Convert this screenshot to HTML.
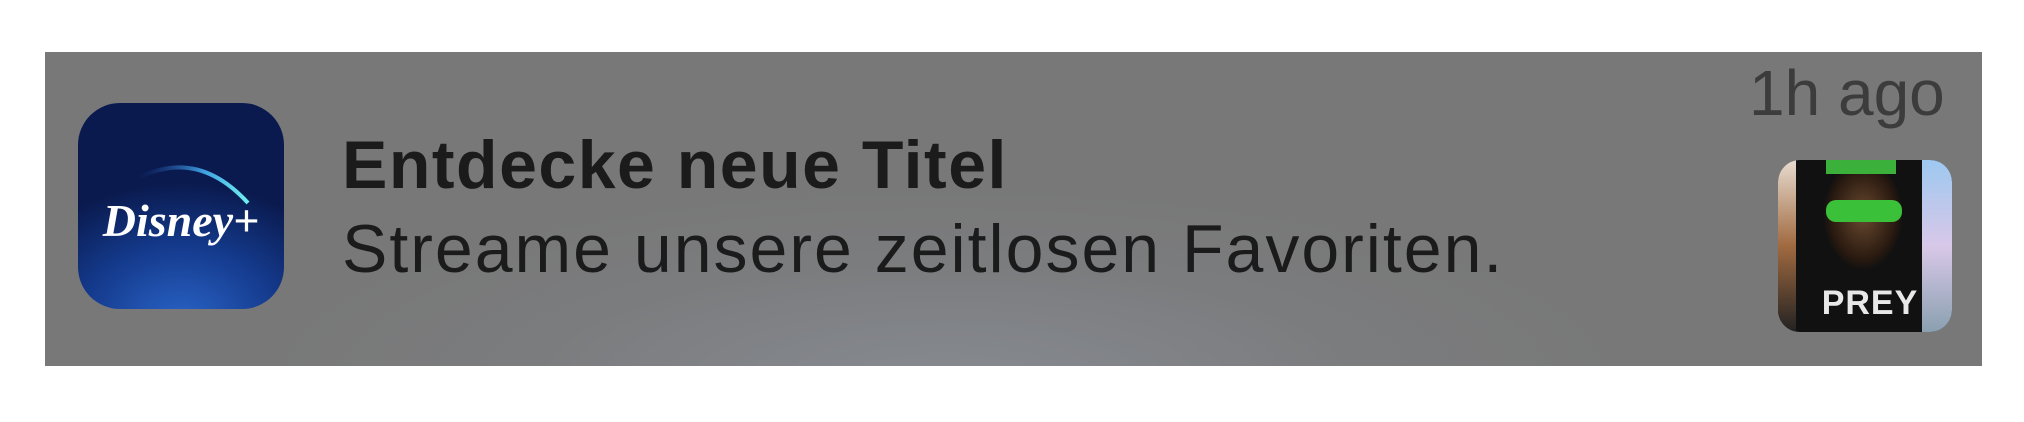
<!DOCTYPE html>
<html><head><meta charset="utf-8"><style>
html,body{margin:0;padding:0;width:2024px;height:422px;background:#fff;overflow:hidden;position:relative;font-family:"Liberation Sans",sans-serif}
.card{position:absolute;left:45px;top:52px;width:1937px;height:314px;background:radial-gradient(ellipse 700px 200px at 900px 330px,#868a90 0%,#7b7c7e 60%,#787878 100%)}
.icon{position:absolute;left:78px;top:103px;width:206px;height:206px;border-radius:42px;background:radial-gradient(ellipse 180px 140px at 103px 220px,#2a64c8 0%,#143a8c 55%,#0a1a4e 100%);overflow:hidden}
.t{position:absolute;left:342px;white-space:nowrap;color:#1b1b1b}
.thumb{position:absolute;left:1778px;top:160px;width:174px;height:172px;border-radius:22px;overflow:hidden;background:#111}
</style></head><body>
<div class="card"></div>
<div class="icon">
<svg width="206" height="206" viewBox="0 0 206 206">
<defs><linearGradient id="g" x1="0" x2="1"><stop offset="0" stop-color="#1a3a9a" stop-opacity="0"/><stop offset="0.6" stop-color="#3fa0e0"/><stop offset="1" stop-color="#6ff0f0"/></linearGradient></defs>
<path d="M60 75 Q120 45 170 100" stroke="url(#g)" stroke-width="4" fill="none"/>
<text x="103" y="133" text-anchor="middle" font-family="Liberation Serif,serif" font-style="italic" font-weight="bold" font-size="46" fill="#fff">Disney+</text>
</svg></div>
<div class="t" style="top:126px;font-size:68px;font-weight:bold;letter-spacing:1.5px">Entdecke neue Titel</div>
<div class="t" style="top:210px;font-size:68px;letter-spacing:2px">Streame unsere zeitlosen Favoriten.</div>
<div class="t" style="left:1749px;top:56px;font-size:64px;color:#3c3c3c">1h ago</div>
<div class="thumb">
<div style="position:absolute;left:0;top:0;width:18px;height:172px;background:linear-gradient(#e8dcd0,#a06a40 50%,#222)"></div>
<div style="position:absolute;right:0;top:0;width:30px;height:172px;background:linear-gradient(#9ec8f0,#d8c8e8 50%,#8aa0b0)"></div>
<div style="position:absolute;left:40px;top:0;width:90px;height:120px;background:radial-gradient(ellipse 40px 55px at 45px 55px,#6a4a30,#2a1a10 80%,#111)"></div>
<div style="position:absolute;left:48px;top:0;width:70px;height:14px;background:#3bb03a"></div>
<div style="position:absolute;left:48px;top:40px;width:76px;height:22px;background:#3bc03a;border-radius:10px"></div>
<div style="position:absolute;left:40px;top:124px;width:104px;text-align:center;color:#e8e8e8;font-weight:bold;font-size:34px;letter-spacing:1px">PREY</div>
</div>
</body></html>
